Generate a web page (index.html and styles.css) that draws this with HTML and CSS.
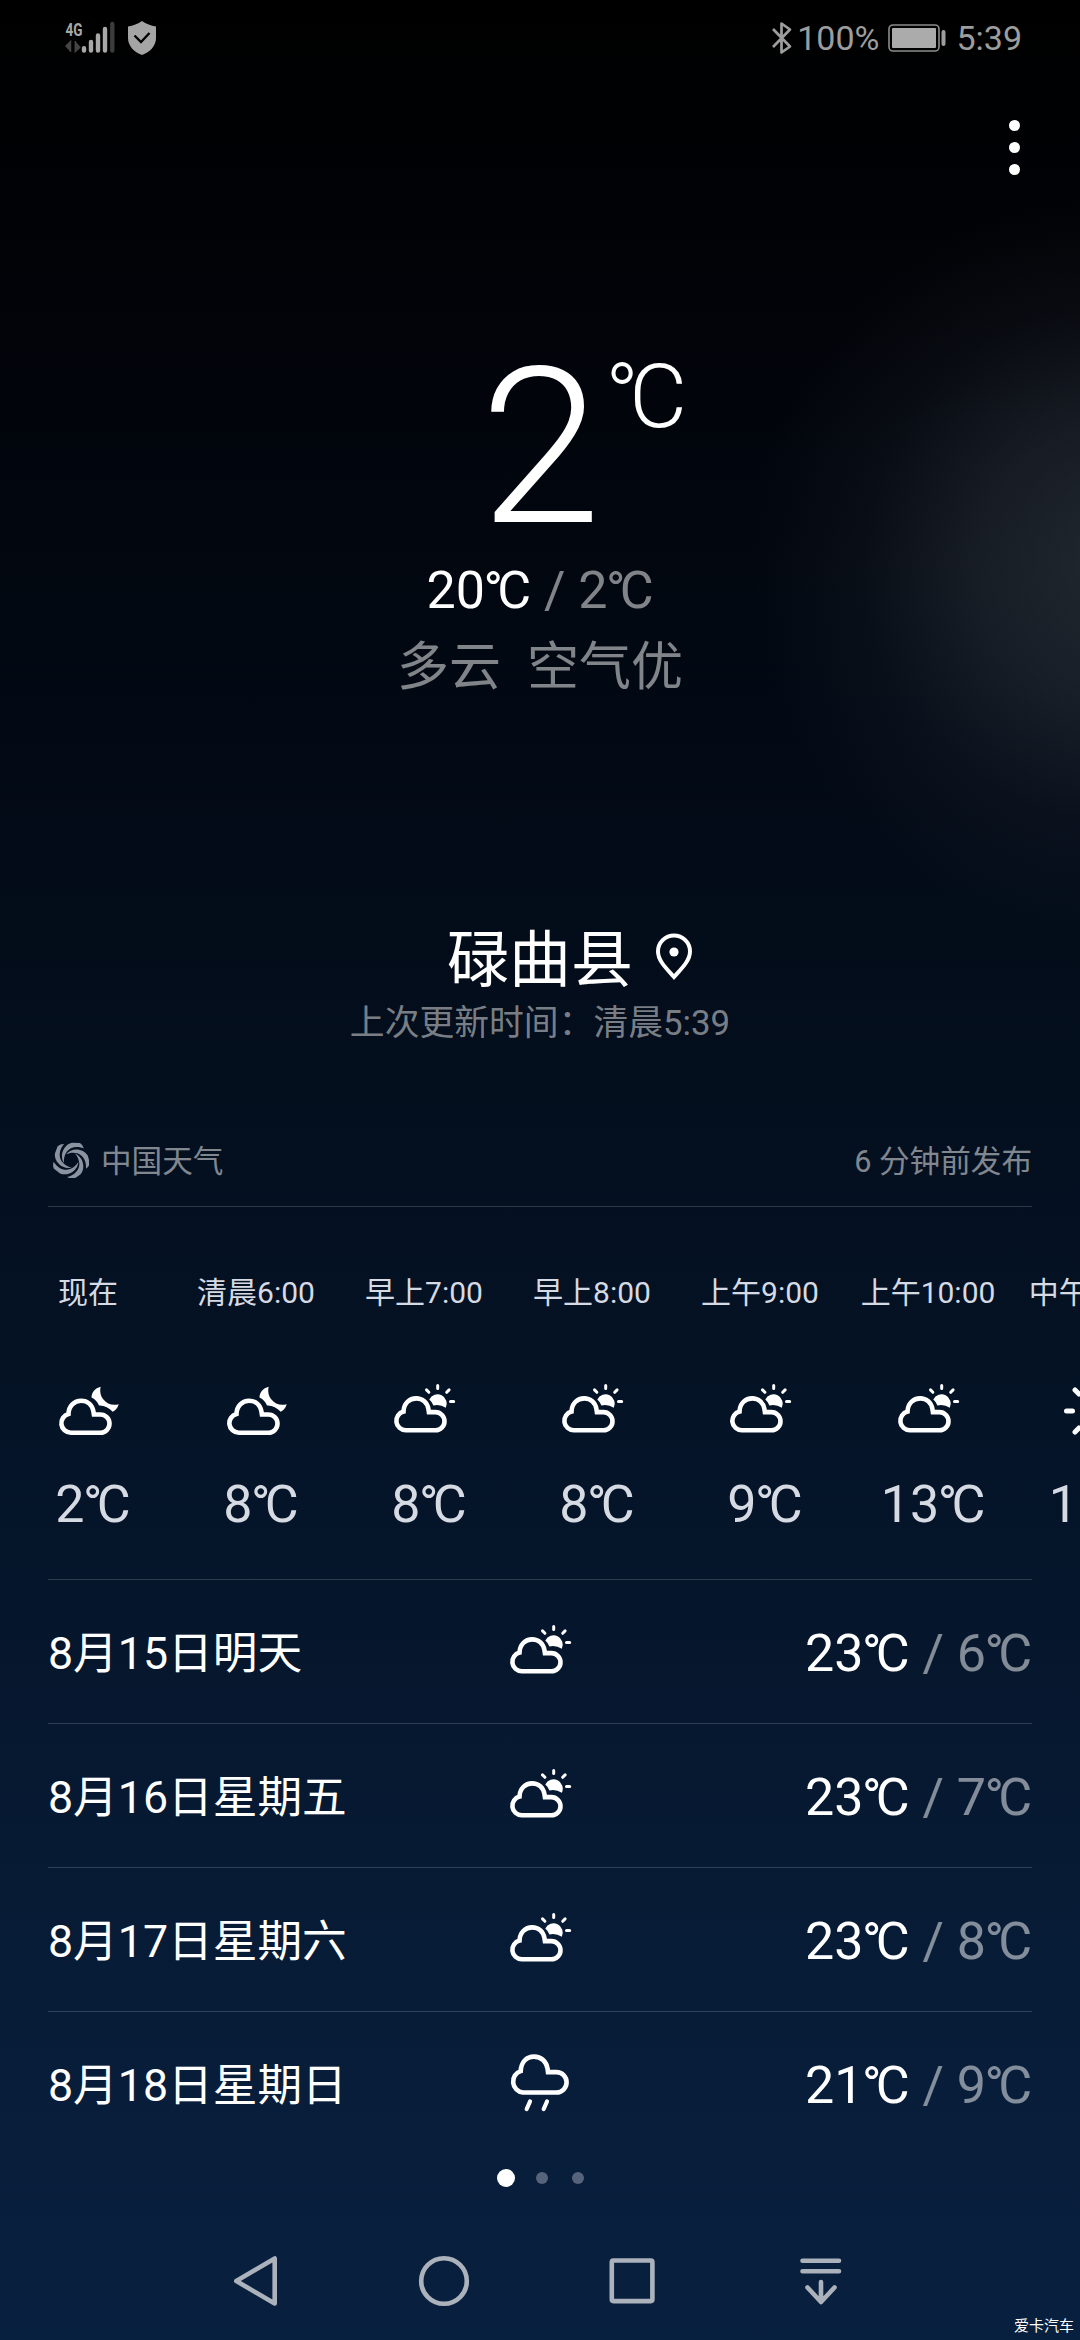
FILE: index.html
```html
<!DOCTYPE html>
<html lang="zh-CN">
<head>
<meta charset="utf-8">
<title>天气</title>
<link rel="stylesheet" href="styles.css">
</head>
<body>
<svg class="defs" width="0" height="0" aria-hidden="true">
  <symbol id="cloud-sun" viewBox="0 0 64 64">
    <path d="M13.800 51.300a9.500 9.500 0 0 1-2.300-18.700c.2-8 5.700-13.200 12.700-13.200 6.400 0 11 4.300 12.200 10.500l.5 3.200h6.500a9.100 9.100 0 0 1 0 18.200z" fill="none" stroke="#fff" stroke-width="4.600" stroke-linejoin="miter"/>
    <path d="M37.300 20.500a8.800 8.800 0 1 1 16.500 8.200 17 17 0 0 0-12.400-2.200q-1.300-3.600-4.100-6z" fill="#fff"/>
    <path d="M45.700 9.500V6.600M54.700 13.300l2.400-2.400M58.500 22.500h3.200M36.900 13.300l-2.400-2.400" stroke="#fff" stroke-width="3" stroke-linecap="round"/>
  </symbol>
  <symbol id="cloud-moon" viewBox="0 0 64 64">
    <path d="M14.800 53.700a9.500 9.500 0 0 1-2.300-18.700c.2-8 5.700-13.200 12.700-13.200 6.400 0 11 4.300 12.200 10.500l.5 3.200h6.500a9.100 9.100 0 0 1 0 18.200z" fill="none" stroke="#fff" stroke-width="4.600"/>
    <path d="M44.700 7.700C39 9 35.500 13.500 35.500 18.500c4 2 6 4.500 7.500 8 5-.3 10 2 13.700 6.300 3-1.500 5-4 6-7.500-6.500 1.500-12-.5-15-4.500-3.500-4-4-9-3-13.100z" fill="#fff"/>
  </symbol>
  <symbol id="rain" viewBox="0 0 64 64">
    <path d="M15 40.500a11 11 0 0 1-2.300-21.400c.3-9 5.800-14.500 13.300-14.500 7.300 0 12.500 5 13.600 12.300l.4 3.200h8.400a10.200 10.200 0 0 1 0 20.400z" fill="none" stroke="#fff" stroke-width="4.600"/>
    <path d="M22 49.500l-3.300 7.500M39 49.500l-3.300 7.500" stroke="#fff" stroke-width="4.200" stroke-linecap="round"/>
  </symbol>
  <symbol id="sun" viewBox="0 0 64 64">
    <circle cx="32" cy="32" r="16" fill="#fff"/>
    <path d="M2.500 32h6M55.500 32h6M32 2.500v6M32 55.500v6M11 11l4 4M49 49l4 4M53 11l-4 4M15 49l-4 4" stroke="#fff" stroke-width="5" stroke-linecap="round"/>
  </symbol>
</svg>

<main class="screen">
  <header class="status">
    <div class="status-left">
      <svg class="signal" width="52" height="34" viewBox="0 0 52 34">
        <text class="net" x="0.500" y="14.800" textLength="17" lengthAdjust="spacingAndGlyphs">4G</text>
        <path d="M0.500 25.500l5-5v10.500M10.300 20v10.500l5-4.500" fill="#444" stroke="#444" stroke-width="1.500"/>
        <path d="M19 27.200v2.300M26 21v8.500M33 14.500v15M40 8v21.500" stroke="#a8a8a8" stroke-width="4.400" stroke-linecap="round"/>
        <path d="M47.300 3v26.500" stroke="#3c3c3c" stroke-width="4.400" stroke-linecap="round"/>
      </svg>
      <svg class="shield" width="30" height="36" viewBox="0 0 30 36">
        <path d="M15 1c4 3 9 4.800 14 5.500V18c0 8-6 14-14 17C7 32 1 26 1 18V6.500C6 5.800 11 4 15 1z" fill="#a5a5a5"/>
        <path d="M7.500 15.500l6.500 6.500 8.500-9" fill="none" stroke="#000" stroke-width="2.400"/>
      </svg>
    </div>
    <div class="status-right">
      <svg class="bluetooth" width="22" height="34" viewBox="0 0 22 34"><path d="M2 8l17 17.500-8.500 6V2.500L19 8.500 2 26" fill="none" stroke="#9d9d9d" stroke-width="2.700" stroke-linejoin="round"/></svg>
      <span class="percent">100%</span>
      <svg class="battery" width="58" height="28" viewBox="0 0 58 28"><rect x="1" y="1" width="50" height="26" rx="4" fill="none" stroke="#8c8c8c" stroke-width="1.600"/><rect x="4" y="4" width="44" height="20" rx="1" fill="#ababab"/><path d="M55.500 8v12" stroke="#9d9d9d" stroke-width="4" stroke-linecap="round"/></svg>
      <span class="clock">5:39</span>
    </div>
  </header>

  <div class="toolbar"><span class="menu"><i></i><i></i><i></i></span></div>

  <section class="current">
    <div class="now"><span class="now-value">2</span><span class="now-unit"><s>°</s>C</span></div>
    <div class="range temps">20<s>°</s>C<span class="dim"> / 2<s>°</s>C</span></div>
    <div class="condition">多云&nbsp; 空气优</div>
    <div class="place"><span>碌曲县</span><svg class="pin" width="38" height="48" viewBox="0 0 38 48"><path d="M19 44C12 36 3 28 3 18.500a16 16 0 0 1 32 0C35 28 26 36 19 44z" fill="none" stroke="#fff" stroke-width="4"/><circle cx="19" cy="19" r="4.600" fill="#fff"/></svg></div>
    <div class="updated">上次更新时间：清晨5:39</div>
  </section>

  <section class="source">
    <svg class="logo" width="36" height="36" viewBox="-18 -18 36 36" fill="#8b93a0">
      <path id="blade" d="M-7 3C-12-5-7-15.500 1-17.300L9-17Q12-15 13-11.500C6-14.500-1-13-4.500-8-6.500-5-7.500-1-7 3z"/>
      <use href="#blade" transform="rotate(72)"/><use href="#blade" transform="rotate(144)"/><use href="#blade" transform="rotate(216)"/><use href="#blade" transform="rotate(288)"/>
    </svg>
    <span>中国天气</span><span class="published">6 分钟前发布</span>
  </section>

  <section class="hours">
    <div class="hour"><span>现在</span><svg><use href="#cloud-moon"/></svg><b>2<s>°</s>C</b></div>
    <div class="hour"><span>清晨6:00</span><svg><use href="#cloud-moon"/></svg><b>8<s>°</s>C</b></div>
    <div class="hour"><span>早上7:00</span><svg><use href="#cloud-sun"/></svg><b>8<s>°</s>C</b></div>
    <div class="hour"><span>早上8:00</span><svg><use href="#cloud-sun"/></svg><b>8<s>°</s>C</b></div>
    <div class="hour"><span>上午9:00</span><svg><use href="#cloud-sun"/></svg><b>9<s>°</s>C</b></div>
    <div class="hour"><span>上午10:00</span><svg><use href="#cloud-sun"/></svg><b>13<s>°</s>C</b></div>
    <div class="hour"><span>中午11:00</span><svg><use href="#sun"/></svg><b>15<s>°</s>C</b></div>
  </section>

  <section class="days">
    <div class="day"><span>8月15日明天</span><svg><use href="#cloud-sun"/></svg><div class="temps">23<s>°</s>C<span class="dim"> / 6<s>°</s>C</span></div></div>
    <div class="day"><span>8月16日星期五</span><svg><use href="#cloud-sun"/></svg><div class="temps">23<s>°</s>C<span class="dim"> / 7<s>°</s>C</span></div></div>
    <div class="day"><span>8月17日星期六</span><svg><use href="#cloud-sun"/></svg><div class="temps">23<s>°</s>C<span class="dim"> / 8<s>°</s>C</span></div></div>
    <div class="day"><span>8月18日星期日</span><svg><use href="#rain"/></svg><div class="temps">21<s>°</s>C<span class="dim"> / 9<s>°</s>C</span></div></div>
  </section>

  <div class="pager"><i class="on"></i><i></i><i></i></div>

  <nav class="nav">
    <svg viewBox="0 0 60 60"><path d="M49.700 7.500v45L11.300 30z"/></svg>
    <svg viewBox="0 0 60 60"><circle cx="30" cy="30" r="22.800"/></svg>
    <svg viewBox="0 0 60 60"><rect x="8.800" y="9.500" width="40.600" height="40.600" rx="1.500"/></svg>
    <svg viewBox="0 0 60 60"><path d="M10.500 9.700h36.500M10.500 20.300h36.500M29 31v20M15.500 36.500L29 51l13.500-14.500"/></svg>
  </nav>
  <div class="watermark">爱卡汽车</div>
</main>
</body>
</html>
```
FILE: styles.css
```css
* { box-sizing: border-box; }
body { margin: 0; font-family: Roboto, "Noto Sans CJK SC", sans-serif; color: #fff; background: #000; }
.defs { display: block; height: 0; }
svg { display: block; flex: none; }
s { text-decoration: none; margin-left: -.03em; letter-spacing: -.11em; }
.screen {
  position: relative; width: 1080px; height: 2340px; overflow: hidden;
  display: flex; flex-direction: column;
  background:
    radial-gradient(ellipse 370px 370px at 1120px 565px, rgba(60,68,74,.54), rgba(56,62,70,.4) 38%, rgba(50,56,64,.15) 70%, transparent),
    linear-gradient(#000 0, #010308 300px, #020914 720px, #041020 1180px, #05152a 1560px, #071b35 1900px, #08203f 2340px);
}
.status { height: 76px; display: flex; justify-content: space-between; padding: 0 58px 0 65px; font-size: 34px; line-height: 76px; color: #9d9d9d; }
.status-left, .status-right { display: flex; align-items: center; }
.signal { overflow: visible; }
.net { font: 700 19px Roboto, sans-serif; fill: #a8a8a8; }
.shield { margin-left: 10px; }
.percent { margin-left: 4px; }
.battery { margin: 0 10px 0 9px; }
.toolbar { height: 142px; display: flex; justify-content: flex-end; padding: 44px 60px 0; }
.menu { display: flex; flex-direction: column; gap: 11px; }
.menu i { width: 11px; height: 11px; border-radius: 50%; background: #fff; }
.current { display: flex; flex-direction: column; align-items: center; height: 916px; padding-top: 100px; }
.now { display: flex; align-self: flex-start; align-items: flex-start; height: 242px; font-weight: 300; margin-left: 480px; }
.now-value { font-size: 218px; line-height: 242px; margin-top: 9px; }
.now-unit { font-size: 89px; line-height: 106px; margin: 26px 0 0 7px; }
.temps { font-size: 52px; line-height: 62px; white-space: pre; }
.condition { font-size: 52px; line-height: 76px; margin-top: 8px; color: rgba(255,255,255,.5); white-space: pre; }
.dim { color: rgba(255,255,255,.5); }
.place { display: flex; align-items: center; gap: 22px; font-size: 62px; line-height: 90px; margin-top: 210px; padding-left: 60px; }
.pin { margin-top: -8px; }
.updated { font-size: 34.800px; line-height: 44px; margin-top: -5px; color: rgba(255,255,255,.48); }
.source { height: 73px; margin: 0 48px; padding: 0 0 16px 5px; display: flex; align-items: center; font-size: 30.600px; line-height: 44px; color: rgba(255,255,255,.5); border-bottom: 1px solid rgba(255,255,255,.17); }
.logo { margin-top: -4px; }
.source span { margin-left: 12px; }
.source .published { margin-left: auto; }
.hours { height: 372px; display: flex; padding: 62px 0 0 4px; }
.hour { flex: 0 0 168px; display: flex; flex-direction: column; align-items: center; font-size: 30px; line-height: 48px; color: #d6dae3; }
.hour svg { width: 64px; height: 64px; margin-top: 62px; }
.hour b { font-weight: 400; font-size: 52px; line-height: 62px; margin-top: 31px; padding-left: 10px; }
.days { margin: 0 48px; }
.day { height: 144px; border-top: 1px solid rgba(255,255,255,.17); display: grid; grid-template-columns: 1fr 64px 1fr; align-items: center; font-size: 44.700px; line-height: 64px; }
.day > span { padding-top: 5px; }
.day svg { width: 64px; height: 64px; }
.day .temps { text-align: right; padding-top: 4px; }
.pager { display: flex; align-items: center; justify-content: center; gap: 24px; height: 46px; }
.pager i { width: 12px; height: 12px; border-radius: 50%; background: #56637a; }
.pager .on { width: 18px; height: 18px; background: #fff; margin-right: -3px; }
.nav { display: flex; gap: 129px; padding: 50px 0 0 225px; }
.nav svg { width: 60px; height: 60px; fill: none; stroke: #abb2bc; stroke-width: 4.600; stroke-linecap: round; stroke-linejoin: round; }
.watermark { position: absolute; right: 6px; bottom: 3px; font-size: 15px; line-height: 22px; }
```
